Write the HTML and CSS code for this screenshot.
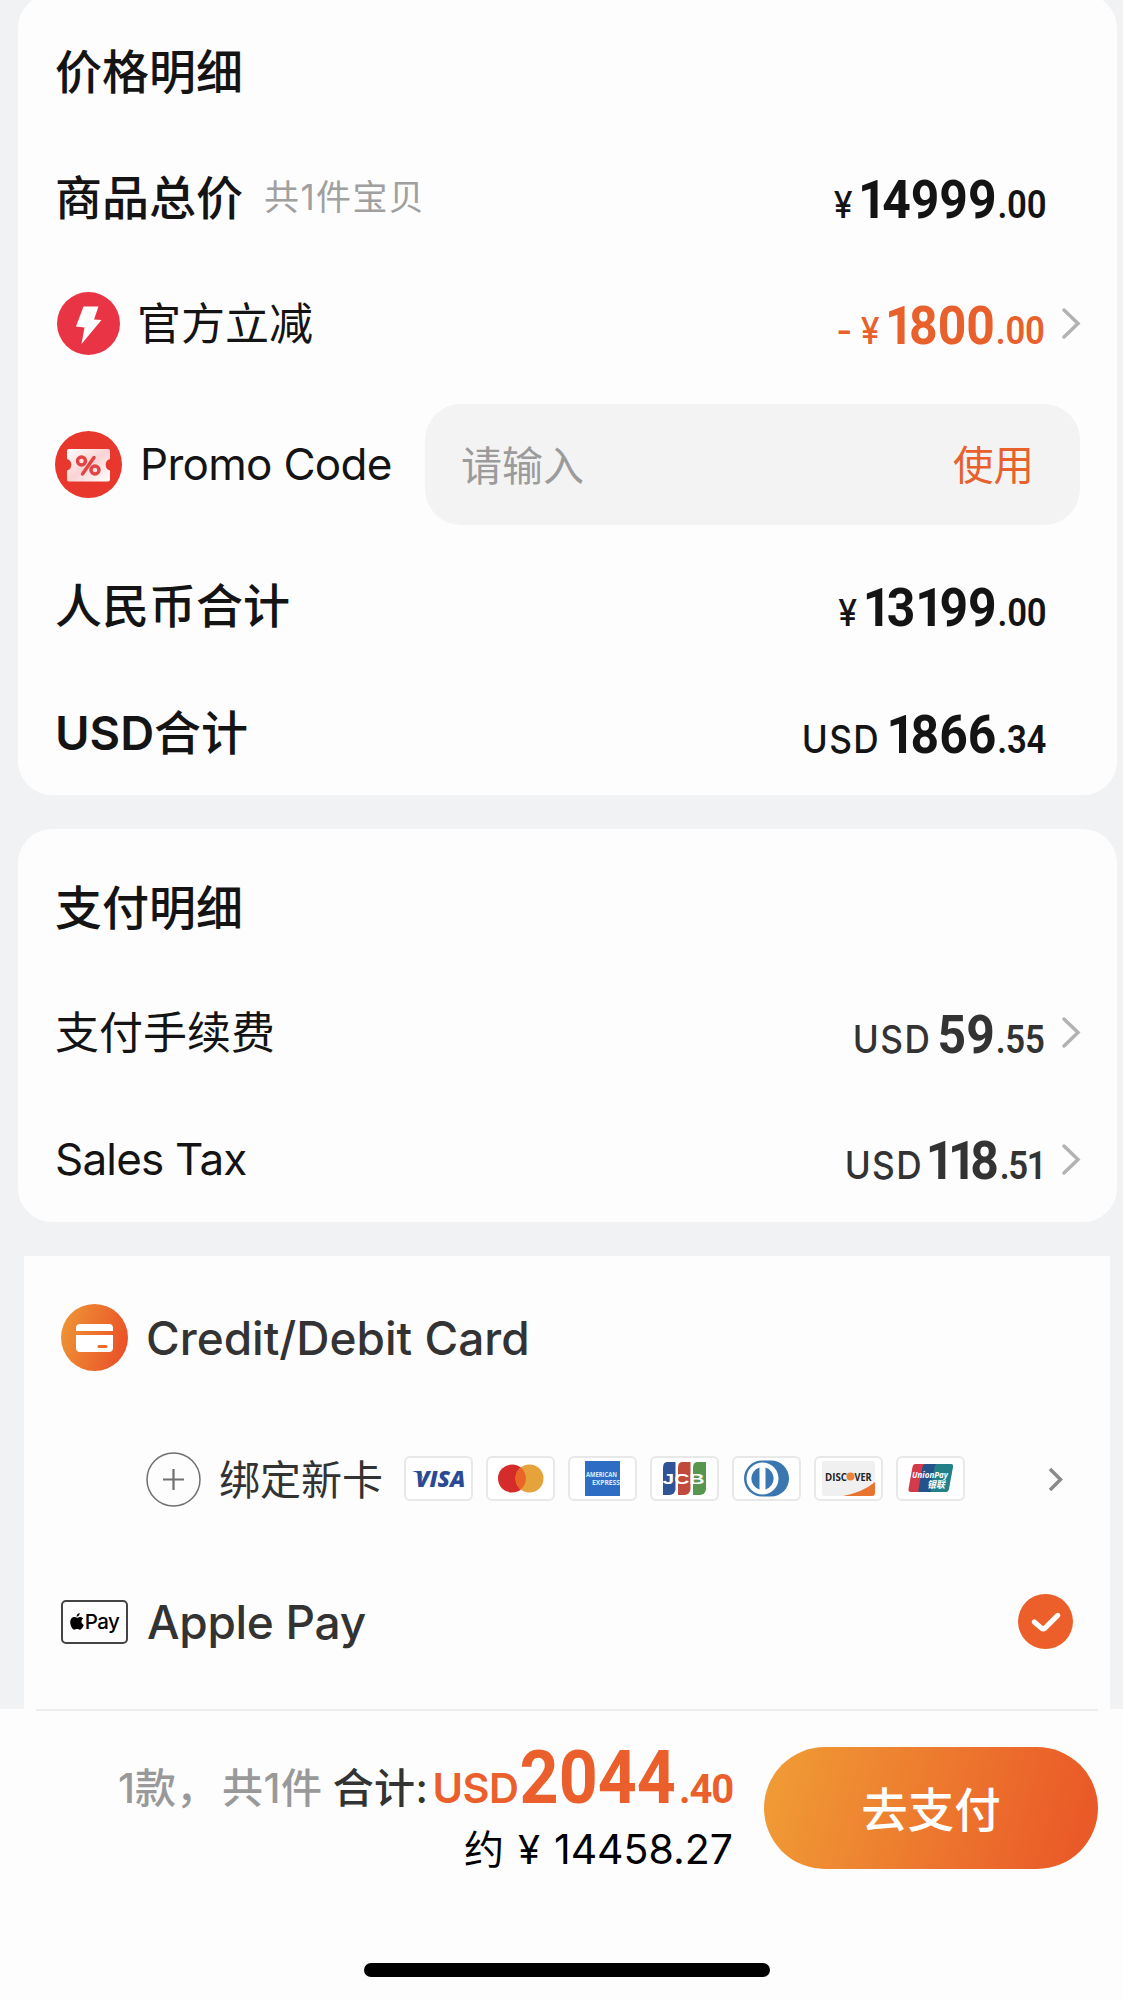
FILE: index.html
```html
<!DOCTYPE html>
<html lang="zh-CN">
<head>
<meta charset="utf-8">
<title>价格明细</title>
<link rel="stylesheet" href="styles.css">
</head>
<body>
<main class="page">
  <section class="card card-price">
    <div class="row row-title"><h2 class="label strong">价格明细</h2></div>
    <div class="row row-goods">
      <span class="label strong">商品总价</span><span class="note">共1件宝贝</span>
      <span class="price"><span class="yen">¥</span><span class="int"><span class="one">1</span>4999</span><span class="dec">.00</span></span>
    </div>
    <div class="row row-discount">
      <svg class="badge-bolt" viewBox="0 0 63 63"><circle cx="31.5" cy="31.5" r="31.5" fill="#e93445"/><path d="M26.500 14.5h15L37 27.500l7.500 .5L24.500 52l3-16.500l-8.500-1z" fill="#fff"/></svg>
      <span class="label">官方立减</span>
      <span class="price accent"><span class="minus">-</span><span class="yen">¥</span><span class="int"><span class="one">1</span>800</span><span class="dec">.00</span></span>
      <svg class="chevron" viewBox="0 0 18 31"><path d="M2 2l14 13.500L2 29"/></svg>
    </div>
    <div class="row row-promo">
      <svg class="badge-promo" viewBox="0 0 67 67">
        <defs><linearGradient id="ticket" x1="0" y1="0" x2="1" y2="1"><stop offset="0" stop-color="#fff"/><stop offset=".5" stop-color="#f9d3d3"/><stop offset="1" stop-color="#fff"/></linearGradient></defs>
        <circle cx="33.500" cy="33.500" r="33.500" fill="#e8372d"/>
        <path d="M14 18h39a2 2 0 0 1 2 2v8a6 6 0 0 0 0 11.500v9a2 2 0 0 1-2 2H14a2 2 0 0 1-2-2v-9a6 6 0 0 0 0-11.500v-8a2 2 0 0 1 2-2z" fill="url(#ticket)"/>
        <g fill="none" stroke="#e04444" stroke-width="3.400" stroke-linecap="round"><circle cx="26.500" cy="30" r="4"/><circle cx="40" cy="39" r="4"/><path d="M39 26.500L27.500 43"/></g>
      </svg>
      <span class="label promo-text">Promo Code</span>
      <div class="promo-field"><span class="placeholder">请输入</span><span class="apply">使用</span></div>
    </div>
    <div class="row row-cny">
      <span class="label strong">人民币合计</span>
      <span class="price"><span class="yen">¥</span><span class="int"><span class="one">1</span>3<span class="one">1</span>99</span><span class="dec">.00</span></span>
    </div>
    <div class="row row-usd">
      <span class="label strong"><span class="usd-label">USD</span>合计</span>
      <span class="price"><span class="cur">USD</span><span class="int"><span class="one">1</span>866</span><span class="dec">.34</span></span>
    </div>
  </section>

  <section class="card card-fees">
    <div class="row"><h2 class="label strong">支付明细</h2></div>
    <div class="row">
      <span class="label">支付手续费</span>
      <span class="price soft"><span class="cur">USD</span><span class="int">59</span><span class="dec">.55</span></span>
      <svg class="chevron" viewBox="0 0 18 31"><path d="M2 2l14 13.500L2 29"/></svg>
    </div>
    <div class="row row-tax">
      <span class="label tax-text">Sales Tax</span>
      <span class="price soft"><span class="cur">USD</span><span class="int"><span class="one">11</span>8</span><span class="dec">.51</span></span>
      <svg class="chevron" viewBox="0 0 18 31"><path d="M2 2l14 13.500L2 29"/></svg>
    </div>
  </section>

  <section class="methods">
    <div class="method method-card">
      <svg class="method-icon" viewBox="0 0 67 67">
        <defs><linearGradient id="orange" x1="0" y1=".35" x2="1" y2=".65"><stop offset="0" stop-color="#ee9335"/><stop offset="1" stop-color="#ea5028"/></linearGradient></defs>
        <circle cx="33.500" cy="33.500" r="33.500" fill="url(#orange)"/>
        <path d="M15 27v-3a4 4 0 0 1 4-4h29a4 4 0 0 1 4 4v3zM15 31h37v13a4 4 0 0 1-4 4H19a4 4 0 0 1-4-4z" fill="#fff"/>
        <path d="M38 42.500h7" stroke="#ec6a2c" stroke-width="3" stroke-linecap="round"/>
      </svg>
      <span class="method-name credit">Credit/Debit Card</span>
    </div>
    <div class="method method-bind">
      <svg class="plus" viewBox="0 0 55 55"><g fill="none" stroke="#707070"><circle cx="27.500" cy="27.500" r="26.500" stroke-width="1.500"/><path d="M27.500 17v21M17 27.500h21" stroke-width="2.200"/></g></svg>
      <span class="bind-text">绑定新卡</span>
      <div class="brands">
        <span class="brand"><svg viewBox="0 0 65 41"><text x="9.500" y="29" textLength="50" lengthAdjust="spacingAndGlyphs" class="t-visa">VISA</text><path d="M6 13h8l3.500 8q-3-6-11.500-8z" fill="#2b4a94"/></svg></span>
        <span class="brand"><svg viewBox="0 0 65 41"><circle cx="24" cy="20.500" r="14" fill="#d62b2b"/><circle cx="41.500" cy="20.500" r="14" fill="#e6a33c"/><path d="M32.750 9.600a14 14 0 0 1 0 21.800a14 14 0 0 1 0-21.800z" fill="#eb6526"/></svg></span>
        <span class="brand"><svg viewBox="0 0 65 41"><path d="M15 3h35v35H15z" fill="#2d6dc4"/><text x="16" y="19" textLength="31" lengthAdjust="spacingAndGlyphs" class="t-amex">AMERICAN</text><text x="22" y="27" textLength="28" lengthAdjust="spacingAndGlyphs" class="t-amex">EXPRESS</text></svg></span>
        <span class="brand"><svg viewBox="0 0 65 41"><path d="M15 4h8.500v27a6 6 0 0 1-6 6H11V10q0-6 4-6z" fill="#2f5397"/><path d="M30 4h8.500v27a6 6 0 0 1-6 6H26V10q0-6 4-6z" fill="#c04a3c"/><path d="M45 4h9v27a6 6 0 0 1-6 6h-7V10q0-6 4-6z" fill="#56964f"/><text x="10.500" y="26" textLength="42" lengthAdjust="spacingAndGlyphs" class="t-jcb">JCB</text></svg></span>
        <span class="brand"><svg viewBox="0 0 65 41"><rect x="10" y="2.500" width="45" height="36" rx="18" fill="#3a76b0"/><circle cx="28.500" cy="20.500" r="16" fill="#fff"/><path d="M25.500 9.500a11.500 11.500 0 0 0 0 22zM31.500 9.500a11.500 11.500 0 0 1 0 22z" fill="#3a76b0"/></svg></span>
        <span class="brand"><svg viewBox="0 0 65 41"><rect x="6" y="3" width="53" height="35" rx="2" fill="#f0f0f1"/><path d="M59 24v11a3 3 0 0 1-3 3H27q20-4 32-14z" fill="#e9742f"/><text x="9" y="22.500" textLength="22" lengthAdjust="spacingAndGlyphs" class="t-disc">DISC</text><circle cx="34.500" cy="18.500" r="4" fill="#e9833a"/><text x="38.500" y="22.500" textLength="17" lengthAdjust="spacingAndGlyphs" class="t-disc">VER</text></svg></span>
        <span class="brand"><svg viewBox="0 0 65 41"><path d="M17 6h13l-6 28H13q-3 0-2.500-3l4-22q.6-3 2.500-3z" fill="#d53a4b"/><path d="M27 6h14l-6 28H22q-2 0-1.500-3l4-22q.6-3 2.500-3z" fill="#24538c"/><path d="M39 6h14q2.500 0 2 3l-4 22q-.7 3-3 3H34q-2 0-1.500-3l4-22q.6-3 2.500-3z" fill="#238087"/><text x="14" y="20" textLength="36" lengthAdjust="spacingAndGlyphs" class="t-up">UnionPay</text><text x="29" y="30" textLength="18" lengthAdjust="spacingAndGlyphs" class="t-upcn">银联</text></svg></span>
      </div>
      <svg class="chevron-dark" viewBox="0 0 15 25"><path d="M2 2l10.500 10.500L2 23"/></svg>
    </div>
    <div class="method method-apple">
      <span class="apple-badge">
        <svg viewBox="0 0 14 17"><path d="M9.700 0c.2 1.800-1.300 3.800-3.100 3.700C6.400 2.100 7.900.3 9.700 0zM7 4.700c.8 0 1.600-.8 3-.8 1.300 0 2.500.6 3.200 1.700-2.600 1.600-2.200 5.200.6 6.400-.7 2-2.200 4.700-3.900 4.700-1.100 0-1.500-.7-2.800-.7s-1.800.7-2.800.7C2.500 16.700.2 12.600.2 9.300.2 6.200 2 4 4.200 4c1.300 0 2 .7 2.800.7z"/></svg>
        <span class="apple-word">Pay</span>
      </span>
      <span class="method-name apple">Apple Pay</span>
      <svg class="check" viewBox="0 0 54 54"><circle cx="27" cy="27" r="27" fill="#ec5f2a"/><path d="M16 27.500l7 6q1.800 1.300 3.500 0L39 21" fill="none" stroke="#fff" stroke-width="5" stroke-linecap="round"/></svg>
    </div>
  </section>

  <footer class="bar">
    <div class="divider"></div>
    <div class="checkout">
      <div class="totals">
        <div class="total-line">
          <span class="count">1款，</span><span class="count pieces">共1件</span><span class="sum-label">合计:</span><span class="t-cur">USD</span><span class="t-int">2044</span><span class="t-dec">.40</span>
        </div>
        <div class="approx"><span>约</span><span class="approx-yen">¥</span><span class="approx-num">14458.27</span></div>
      </div>
      <button class="pay" type="button">去支付</button>
    </div>
    <div class="home"></div>
  </footer>
</main>
</body>
</html>
```
FILE: styles.css
```css
* { box-sizing: border-box; }
body {
  margin: 0;
  background: #f1f2f4;
  color: #141414;
  font-family: Inter, "Noto Sans CJK SC", sans-serif;
}
svg { display: block; flex: none; overflow: visible; }
.page { width: 1123px; height: 2000px; overflow: hidden; display: flex; flex-direction: column; }

.card { margin: 0 6px 0 18px; background: #fdfdfe; border-radius: 34px; padding: 0 37px; flex: none; }
.card-price { margin-top: -6px; height: 801px; padding-top: 14px; }
.card-fees { margin-top: 34px; height: 393px; padding-top: 16px; }
.row { display: flex; align-items: center; height: 125px; white-space: nowrap; }
.row-title { height: 127px; }
.row-goods { height: 126px; }
.row-promo { height: 157px; }
.row-cny { height: 126px; }
.row-usd { height: 127px; }
.row-tax { height: 128px; }

.label { margin: 0; font-size: 44px; font-weight: 400; line-height: 60px; }
.strong { font-size: 47px; font-weight: 500; }
.usd-label { font-weight: 600; }
.note { margin-left: 21px; font-size: 35px; line-height: 44px; padding-bottom: 3px; color: #a0a0a0; font-weight: 400; letter-spacing: 1.400px; }

/* Amounts use a slightly condensed face */
.price {
  margin-left: auto;
  margin-right: 34px;
  padding-top: 8px;
  display: flex;
  align-items: baseline;
  line-height: 60px;
  transform: scaleX(.915);
  transform-origin: 100% 50%;
}
.price:has(+ .chevron) { margin-right: 17px; }
.int { font-family: Roboto, sans-serif; font-size: 54.500px; font-weight: 700; margin-left: 6px; }
.dec { font-family: Roboto, sans-serif; font-size: 38px; font-weight: 600; letter-spacing: -.3px; margin-left: 1px; }
.one { letter-spacing: -5px; }
.row-tax .one { letter-spacing: -7px; }
.row-tax .int { margin-left: 2px; }
.row-tax .dec { letter-spacing: -1.500px; }
.yen { font-size: 37px; font-weight: 500; }
.cur { font-size: 38.500px; font-weight: 500; letter-spacing: 1.500px; margin-right: 1px; }
.minus { font-size: 38px; font-weight: 500; margin-right: 9px; }
.accent { color: #e8602c; }
.soft { color: #333; }
.chevron { width: 18px; height: 31px; }
.chevron path { fill: none; stroke: #b2b2b2; stroke-width: 3.500; stroke-linecap: round; }

.badge-bolt { width: 63px; height: 63px; margin: 0 17px 0 2px; }
.badge-promo { width: 67px; height: 67px; margin: 0 18px 0 0; }
.promo-text, .tax-text { letter-spacing: -.8px; }
.promo-text { letter-spacing: -.7px; padding-bottom: 1px; }
.promo-field {
  margin-left: auto;
  width: 655px; height: 121px;
  border-radius: 36px;
  background: #f3f3f3;
  display: flex; align-items: center; justify-content: space-between;
  padding: 0 46px 4px 36px;
  font-size: 41px;
}
.placeholder { color: #9b9b9b; }
.apply { color: #e8602c; font-size: 40.500px; }

.methods { margin: 34px 13px 0 24px; height: 453px; flex: none; background: #fdfdfe; padding: 19px 37px 0 37px; color: #333; }
.method { display: flex; align-items: center; white-space: nowrap; height: 125px; }
.method-icon { width: 67px; height: 67px; margin-right: 18px; }
.method-name { font-size: 46px; font-weight: 500; line-height: 60px; }
.apple { letter-spacing: -.3px; }
.method-bind { height: 159px; padding-left: 85px; padding-right: 10px; }
.method-apple { height: 125px; }
.plus { width: 55px; height: 55px; margin-right: 18px; }
.bind-text { font-size: 41px; padding-bottom: 5px; }
.brands { display: flex; gap: 13px; margin-left: 21px; padding-bottom: 3px; }
.brand { width: 69px; height: 45px; border: 2px solid #e8e8e8; border-radius: 6px; background: #fff; }
.brand svg { width: 65px; height: 41px; }
.t-visa { font: italic 800 23px "Open Sans", sans-serif; fill: #2b4a94; }
.t-amex { font: 700 7px "Open Sans", sans-serif; fill: #dcecff; }
.t-jcb { font: 700 15px "Liberation Sans", sans-serif; fill: #fff; }
.t-disc { font: 700 10.500px "Open Sans", sans-serif; fill: #222; }
.t-up { font: italic 700 9.500px "Open Sans", sans-serif; fill: #fff; }
.t-upcn { font: italic 700 9.500px "Noto Sans CJK SC", sans-serif; fill: #fff; }
.chevron-dark { width: 15px; height: 25px; margin-left: auto; }
.chevron-dark path { fill: none; stroke: #8a8a8a; stroke-width: 3.500; }
.apple-badge {
  width: 67px; height: 44px; margin-right: 19px;
  border: 2px solid #444; border-radius: 5px;
  display: flex; align-items: center; justify-content: center; gap: 1px;
  color: #000;
}
.apple-badge svg { width: 14px; height: 17px; fill: #000; }
.apple-word { font-size: 20.500px; font-weight: 500; letter-spacing: -.5px; line-height: 24px; }
.check { width: 55px; height: 55px; margin-left: auto; }

.bar { height: 291px; flex: none; background: #fdfdfe; display: flex; flex-direction: column; }
.divider { height: 2px; margin: 0 25px 0 36px; background: #ededef; }
.checkout { display: flex; justify-content: flex-end; height: 158px; padding: 36px 25px 0 0; }
.totals { display: flex; flex-direction: column; align-items: flex-end; margin: -6px 31px 0 0; white-space: nowrap; }
.total-line { display: flex; align-items: baseline; height: 83px; line-height: 74px; font-size: 41px; font-weight: 500; }
.count { color: #999; }
.pieces { margin-left: 5px; letter-spacing: .5px; }
.sum-label { color: #333; margin-left: 10px; letter-spacing: .5px; }
.t-cur, .t-int, .t-dec { color: #ea5f2b; font-family: Roboto, sans-serif; font-weight: 700; }
.t-cur { font-family: Inter, sans-serif; font-size: 41.500px; font-weight: 600; margin-left: 4px; letter-spacing: -.6px; }
.t-int { font-size: 74px; margin-left: -12px; transform: scaleX(.92); transform-origin: 100% 50%; }
.t-dec { font-size: 40px; letter-spacing: -1.200px; margin-left: 3px; }
.approx { display: flex; align-items: baseline; line-height: 50px; font-size: 40px; color: #000; }
.approx-yen { margin: 0 14px; }
.approx-num { font-size: 41px; }
.pay {
  width: 334px; height: 122px; border: 0; padding: 0 0 4px; border-radius: 61px; flex: none;
  background: linear-gradient(105deg, #f09a35 5%, #ea5a28 92%);
  color: #fff; font: 500 46.500px Inter, "Noto Sans CJK SC", sans-serif;
}
.home { width: 406px; height: 14px; border-radius: 7px; background: #000; margin: 94px auto 0 364px; }
```
